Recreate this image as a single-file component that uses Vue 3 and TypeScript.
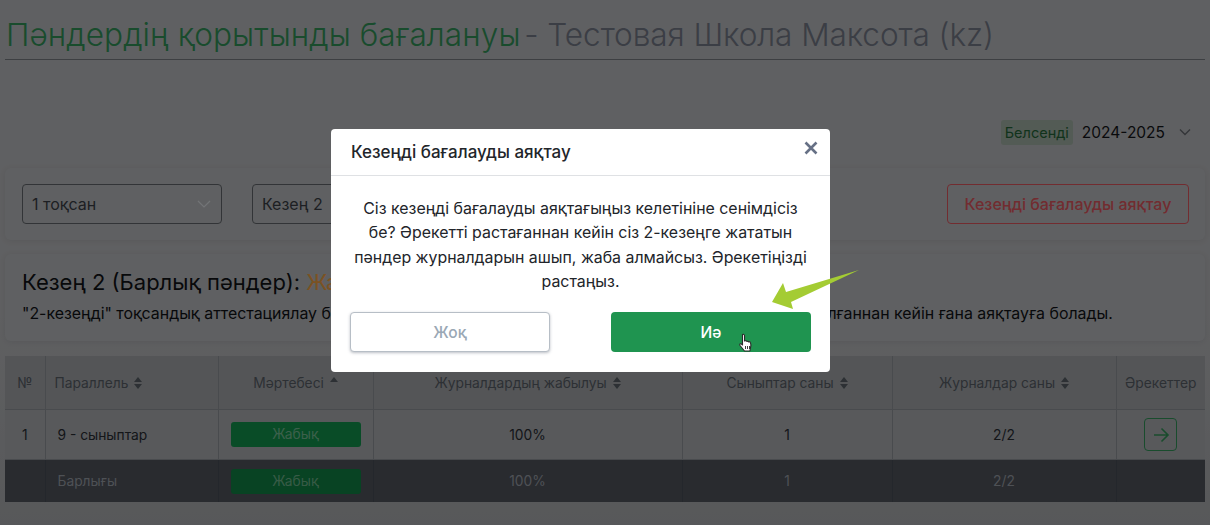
<template>
  <div class="page">
    <h1 class="title"><span class="title-green">Пәндердің қорытынды бағалануы</span> - Тестовая Школа Максота (kz)</h1>

    <div class="year-row">
      <span class="badge">Белсенді</span>
      <span class="year">2024-2025</span>
      <svg class="year-chevron" width="12" height="8" viewBox="0 0 12 8" fill="none" stroke="currentColor" stroke-width="1.4">
        <path d="M1 1.5l5 5 5-5" />
      </svg>
    </div>

    <section class="card filters">
      <div class="select select-quarter">
        <span>1 тоқсан</span>
        <svg width="14" height="8" viewBox="0 0 14 8" fill="none" stroke="currentColor" stroke-width="1.2">
          <path d="M1 1l6 6 6-6" />
        </svg>
      </div>
      <div class="select select-period"><span>Кезең 2</span></div>
      <button class="finish-btn" type="button">Кезеңді бағалауды аяқтау</button>
    </section>

    <section class="card info">
      <h2 class="info-title">Кезең 2 (Барлық пәндер): <span class="info-state">Жабық</span></h2>
      <p class="info-text">"2-кезеңді" тоқсандық аттестациялау барлық пәндер бойынша журналдар жабылып және кезең аяқталғаннан кейін ғана аяқтауға болады.</p>
    </section>

    <table class="grid">
      <colgroup>
        <col v-for="w in colWidths" :key="w.id" :style="{ width: w.px + 'px' }" />
      </colgroup>
      <thead>
        <tr>
          <th>№</th>
          <th class="left">Параллель <span class="sort"></span></th>
          <th>Мәртебесі <span class="sort sort-up"></span></th>
          <th>Журналдардың жабылуы <span class="sort"></span></th>
          <th>Сыныптар саны <span class="sort"></span></th>
          <th>Журналдар саны <span class="sort"></span></th>
          <th>Әрекеттер</th>
        </tr>
      </thead>
      <tbody>
        <tr class="row">
          <td>1</td>
          <td class="left">9 - сыныптар</td>
          <td><span class="status">Жабық</span></td>
          <td>100%</td>
          <td>1</td>
          <td>2/2</td>
          <td>
            <span class="go-btn">
              <svg width="18" height="18" viewBox="0 0 18 18" fill="none" stroke="currentColor" stroke-width="1.6">
                <path d="M2 9h14M9.500 2.500L16 9l-6.500 6.500" />
              </svg>
            </span>
          </td>
        </tr>
        <tr class="total">
          <td></td>
          <td class="left">Барлығы</td>
          <td><span class="status">Жабық</span></td>
          <td>100%</td>
          <td>1</td>
          <td>2/2</td>
          <td></td>
        </tr>
      </tbody>
    </table>

    <div class="backdrop"></div>

    <div class="modal">
      <header class="modal-head">
        <span>Кезеңді бағалауды аяқтау</span>
        <svg class="modal-close" width="14" height="14" viewBox="0 0 14 14" fill="none" stroke="currentColor" stroke-width="2.6">
          <path d="M1.500 1.500l11 11M12.500 1.500l-11 11" />
        </svg>
      </header>
      <div class="modal-body">
        <p class="modal-text">
          Сіз кезеңді бағалауды аяқтағыңыз келетініне сенімдісіз<br />
          бе? Әрекетті растағаннан кейін сіз 2-кезеңге жататын<br />
          пәндер журналдарын ашып, жаба алмайсыз. Әрекетіңізді<br />
          растаңыз.
        </p>
        <div class="modal-actions">
          <button class="btn-no" type="button">Жоқ</button>
          <button class="btn-yes" type="button">Иә</button>
        </div>
      </div>
    </div>

    <!-- annotation arrow from the video, over the modal -->
    <svg class="arrow" width="90" height="46" viewBox="0 0 90 46">
      <path d="M88 1L20 33 22 40 1 33 12 14 15 23z" fill="#a4cc33" />
    </svg>

    <!-- hand pointer -->
    <svg class="hand" width="16" height="20" viewBox="0 0 16 20">
      <path d="M4.500 1.500c1-.6 2 0 2 1V8l1-.2c.8-.1 1.300.2 1.500.6.700-.3 1.400-.1 1.700.5.800-.3 1.500 0 1.700.6.500 1 .6 3.500.1 5.500l-.6 3H6.500L2 12.500c-.8-1.200.4-2.300 1.500-1.500l1 1z" fill="#fff" stroke="#2a2a2a" stroke-width="1.100" stroke-linejoin="round" />
      <path d="M7.500 13v3M9.500 13v3M11.500 13v3" stroke="#2a2a2a" stroke-width=".9" />
    </svg>
  </div>
</template>

<script setup lang="ts">
interface ColWidth {
  id: string
  px: number
}

const colWidths: ColWidth[] = [
  { id: 'num', px: 40 },
  { id: 'parallel', px: 173 },
  { id: 'status', px: 155 },
  { id: 'closing', px: 309 },
  { id: 'classes', px: 210 },
  { id: 'journals', px: 224 },
  { id: 'actions', px: 89 },
]
</script>

<style>
html,
body {
  margin: 0;
  background: #adafb2;
}
</style>

<style scoped>
.page {
  position: relative;
  box-sizing: border-box;
  width: 1210px;
  height: 525px;
  padding: 0 5px;
  overflow: hidden;
  background: linear-gradient(#aeafb2 60%, #9fa1a4 100%);
  font-family: Inter, "Noto Sans", sans-serif;
  color: #2b2f33;
}

.title {
  margin: 0;
  padding: 15px 0 5px 1px;
  height: 39px;
  border-bottom: 1px solid #6f7378;
  font-size: 31.600px;
  font-weight: 300;
  line-height: 39px;
  letter-spacing: -0.1px;
  color: #6c717e;
  white-space: nowrap;
}

.title-green {
  letter-spacing: 0.07px;
  margin-right: -5px;
  color: #2f8a52;
}

.year-row {
  display: flex;
  align-items: center;
  justify-content: flex-end;
  height: 30px;
  margin-top: 57px;
  padding-right: 14px;
}

.badge {
  padding: 5px 4px;
  background: #97a69b;
  border-radius: 3px;
  color: #1f5e33;
  font-size: 14.500px;
  line-height: 15px;
}

.year {
  margin-left: 9px;
  font-size: 15.500px;
  color: #111316;
}

.year-chevron {
  margin-left: 14px;
  color: #5f6368;
}

.card {
  background: #aeb0b3;
  border-radius: 6px;
  box-shadow: 0 1px 6px rgba(0, 0, 0, 0.08);
}

.filters {
  display: flex;
  align-items: center;
  height: 72px;
  margin-top: 21px;
  padding: 0 16px 0 17px;
}

.select {
  box-sizing: border-box;
  display: flex;
  align-items: center;
  justify-content: space-between;
  height: 40px;
  padding: 0 10px 0 9px;
  border: 1px solid #5b5f64;
  border-radius: 4px;
  font-size: 16px;
  color: #363a41;
}

.select svg {
  color: #d0d3d8;
}

.select-quarter {
  width: 200px;
}

.select-period {
  width: 200px;
  margin-left: 30px;
}

.finish-btn {
  width: 242px;
  height: 40px;
  margin-left: auto;
  background: transparent;
  border: 1px solid #d05058;
  border-radius: 4px;
  color: #d05058;
  font: 500 16px Inter, "Noto Sans", sans-serif;
}

.info {
  box-sizing: border-box;
  height: 87px;
  margin-top: 14px;
  padding: 14px 17px;
}

.info-title {
  margin: 0;
  font-size: 22px;
  font-weight: 400;
  line-height: 28px;
  color: #0f1114;
}

.info-state {
  color: #e0953f;
}

.info-text {
  margin: 8px 0 0;
  font-size: 15.900px;
  line-height: 20px;
  color: #0f1114;
  white-space: nowrap;
}

.grid {
  width: 1200px;
  margin-top: 15px;
  table-layout: fixed;
  border-collapse: collapse;
  font-size: 13.800px;
  text-align: center;
}

.grid th {
  height: 53px;
  padding: 0;
  background: #999c9f;
  border-right: 1px solid #85898e;
  border-bottom: 1px solid #85898e;
  font-weight: 400;
  color: #52585f;
}

.grid td {
  padding: 0;
  border-right: 1px solid #85898e;
}

.grid th:last-child,
.grid td:last-child {
  border-right: none;
}

.grid .left {
  padding-left: 9px;
  text-align: left;
}

.row td {
  height: 49px;
  background: #a0a3a7;
  border-bottom: 1px solid #85898e;
  color: #26292f;
}

.total td {
  height: 42px;
  background: #4b4f57;
  border-right-color: #434850;
  color: #8f949c;
}

.total .left {
  padding-left: 12px;
}

.row .left {
  padding-left: 12px;
}

.sort {
  display: inline-block;
  position: relative;
  width: 8px;
  height: 12px;
  margin-left: 2px;
  vertical-align: -1px;
}

.sort::before,
.sort::after {
  content: "";
  position: absolute;
  left: 0;
  border-left: 4px solid transparent;
  border-right: 4px solid transparent;
}

.sort::before {
  top: 0;
  border-bottom: 5px solid #52585f;
}

.sort::after {
  bottom: 0;
  border-top: 5px solid #52585f;
}

.sort-up::after {
  display: none;
}

.status {
  display: block;
  width: 130px;
  height: 25px;
  margin: 0 auto;
  background: #128a48;
  border-radius: 3px;
  color: #6db08a;
  font-size: 13.800px;
  line-height: 25px;
}

.total .status {
  background: #107a40;
  color: #65a680;
}

.go-btn {
  display: inline-flex;
  align-items: center;
  justify-content: center;
  box-sizing: border-box;
  width: 33px;
  height: 33px;
  border: 1px solid #2f8a52;
  border-radius: 4px;
  color: #2f8a52;
  vertical-align: middle;
}

.backdrop {
  position: absolute;
  inset: 0;
  background: rgba(0, 0, 0, 0.45);
}

.modal {
  position: absolute;
  left: 331px;
  top: 129px;
  width: 499px;
  height: 243px;
  background: #fff;
  border-radius: 4px;
}

.modal-head {
  box-sizing: border-box;
  display: flex;
  align-items: center;
  justify-content: space-between;
  height: 47px;
  padding: 0 12px 0 20px;
  border-bottom: 1px solid #dfe1e4;
  font-size: 17px;
  font-weight: 500;
  color: #22252a;
}

.modal-close {
  margin-bottom: 8px;
  color: #667085;
}

.modal-body {
  padding: 21px 19px 0;
}

.modal-text {
  margin: 0;
  font-size: 15.900px;
  line-height: 24.300px;
  text-align: center;
  white-space: nowrap;
  color: #22252a;
}

.modal-actions {
  display: flex;
  justify-content: space-between;
  margin-top: 18px;
}

.modal-actions button {
  width: 200px;
  height: 40px;
  border-radius: 4px;
  font: 500 15.500px Inter, "Noto Sans", sans-serif;
}

.btn-no {
  background: #fff;
  border: 1px solid #b7bec6;
  box-shadow: 0 1px 3px rgba(60, 70, 90, 0.35);
  color: #9aa8b5;
}

.btn-yes {
  background: #1f9450;
  border: none;
  color: #fff;
}

.arrow {
  position: absolute;
  left: 771px;
  top: 269px;
}

.hand {
  position: absolute;
  left: 738px;
  top: 333px;
}
</style>
